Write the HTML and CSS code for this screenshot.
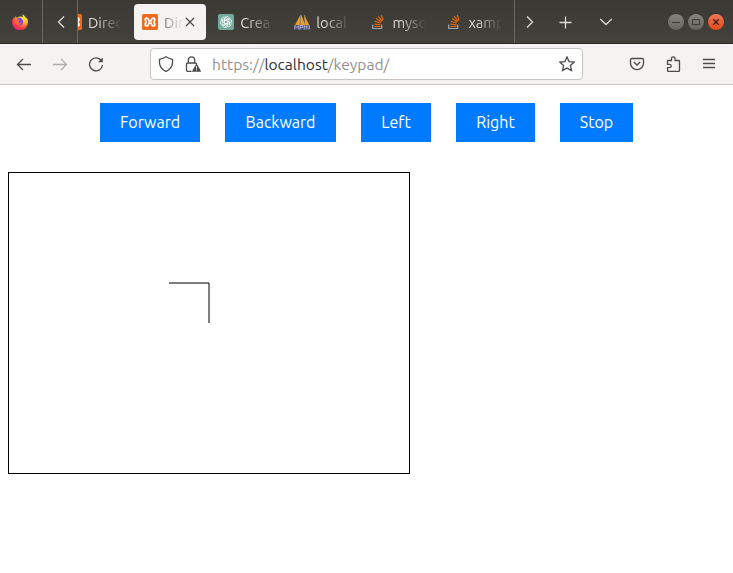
FILE: index.html
```html
<!DOCTYPE html>
<html lang="en">
<head>
<meta charset="utf-8">
<title>Keypad</title>
<link rel="stylesheet" href="styles.css">
</head>
<body>
<svg class="defs" width="0" height="0">
  <defs>
    <radialGradient id="flame" cx=".8" cy=".1" r="1"><stop offset="0" stop-color="#fff04a"/><stop offset=".4" stop-color="#ffc02b"/><stop offset=".7" stop-color="#ff4f3e"/><stop offset="1" stop-color="#ed1a72"/></radialGradient>
    <symbol id="xampp" viewBox="0 0 16 16"><rect width="16" height="16" rx="1.5" fill="#ec6b1c"/><path d="M6.300 5.200Q5.800 4.100 4.600 4.100C2.800 4.100 2.800 6.200 3.800 7L4.300 8 3.800 9C2.800 9.800 2.800 11.900 4.600 11.900Q5.800 11.900 6.300 10.800L7 9.200H9L9.700 10.800Q10.200 11.900 11.400 11.900C13.200 11.900 13.200 9.800 12.200 9L11.700 8 12.200 7C13.200 6.200 13.200 4.100 11.400 4.100Q10.200 4.100 9.700 5.200L9 6.800H7z" fill="none" stroke="#fff" stroke-width="1.700"/></symbol>
    <symbol id="stack" viewBox="0 0 16 16"><path d="M2.7 10.5v4h9v-4" fill="none" stroke="#9ba9b3" stroke-width="1.2"/><path d="M4.3 12.5h6.200M4.300 10l6.200.8M4.700 7.200l6 1.800M6 4.400l5.300 3.400M8.200 2.300l4 4.900M11.300 1l1.700 5.200" fill="none" stroke="#e8670c" stroke-width="1.2"/></symbol>
  </defs>
</svg>
<div class="titlebar">
  <div class="pinned"><svg width="16" height="16" viewBox="0 0 16 16"><path d="M10.800.2c-.6 1.300.1 2.200.5 3C10 2.500 8.500 2.400 7 2.700L4.900 3.800 3.100 2.100c-.3.8-.2 1.300-.1 2L1.400 3.400C.4 5 .1 6.700 0 8.300a8 8 0 0 0 16 0c0-2-.5-3.600-1.500-4.800l-.3 1C13.600 2.500 12 1.700 10.800.2z" fill="url(#flame)"/><circle cx="8" cy="8" r="3.200" fill="#8a45d8"/><path d="M5 4.500Q8 2.500 10.500 5.500L8 6z" fill="#7542e5"/><path d="M2.500 5.500c1.300-1 2.500-.6 3.600.2l1.800.3c-.3 1-1.500.9-2 1.800.4 1.500 2.300 1.200 3.500.7-.7 2-3 3-5 2C2.900 9.300 2 7.200 2.500 5.500z" fill="#ff6934"/></svg></div>
  <div class="scroll-left"><svg width="16" height="16" viewBox="0 0 16 16"><path d="M11 2.500 5.500 8l5.500 5.500" class="light"/></svg></div>
  <div class="tabs">
    <div class="tab"><svg width="16" height="16"><use href="#xampp"/></svg><span class="label">Direc</span></div>
    <div class="tab active"><svg width="16" height="16"><use href="#xampp"/></svg><span class="label">Dir</span><svg class="close" width="10" height="10" viewBox="0 0 10 10"><path d="m1 1 8 8M9 1 1 9"/></svg></div>
    <div class="tab"><svg width="16" height="16" viewBox="0 0 16 16"><rect width="16" height="16" rx="2" fill="#74aa9c"/><g fill="none" stroke="#fff" stroke-width=".75"><path id="petal" d="M6.200 9V5.200C6.200 2 10.300 1.600 11.300 4.200M6.200 7l3.500-2 2.700 1.500"/><use href="#petal" transform="rotate(60 8 8)"/><use href="#petal" transform="rotate(120 8 8)"/><use href="#petal" transform="rotate(180 8 8)"/><use href="#petal" transform="rotate(240 8 8)"/><use href="#petal" transform="rotate(300 8 8)"/></g></svg><span class="label">Crea</span></div>
    <div class="tab"><svg width="16" height="16" viewBox="0 0 16 16"><path d="M6.300 1 1 11h4.800zM7 0l-.2 11h4.500zM10.300 1l1 10h3.900z" fill="#f79a18"/><path d="M6.500 1v10M10.500 1l.7 10" stroke="#b7a78d" stroke-width=".6"/><path d="M0 11h16v4.500H0z" fill="#50527c"/><path d="M.8 15.500v-4l2 2 2-2v4M6.300 15.500v-4h2.500v2H6.500M10.300 15.500v-4l1.300 1.700 1.300-1.700v4M14.300 12h1.300v3h-1.300" fill="none" stroke="#babbe0" stroke-width=".8"/></svg><span class="label">local</span></div>
    <div class="tab"><svg width="16" height="16"><use href="#stack"/></svg><span class="label">mysq</span></div>
    <div class="tab"><svg width="16" height="16"><use href="#stack"/></svg><span class="label">xamp</span></div>
  </div>
  <div class="tab-tools">
    <svg width="16" height="16" viewBox="0 0 16 16"><path d="M5 2.500 10.500 8 5 13.500" class="light"/></svg>
    <svg width="16" height="16" viewBox="0 0 16 16"><path d="M7.500 2.500v12M1.500 8.500h12" class="light"/></svg>
    <svg width="16" height="16" viewBox="0 0 16 16"><path d="m2.200 5 5.800 5.500L13.800 5" class="light"/></svg>
  </div>
  <div class="window-buttons">
    <span class="round"><svg width="16" height="16" viewBox="0 0 16 16"><path d="M4 8.500h8"/></svg></span>
    <span class="round"><svg width="16" height="16" viewBox="0 0 16 16"><path d="M4.500 5.500h7v5h-7z"/></svg></span>
    <span class="round quit"><svg width="16" height="16" viewBox="0 0 16 16"><path d="m5.300 5.300 5.400 5.400M10.700 5.300l-5.400 5.400"/></svg></span>
  </div>
</div>
<div class="toolbar">
  <div class="nav">
    <svg width="16" height="16" viewBox="0 0 16 16"><path d="M15 8.500H1.500M7 3 1.500 8.500 7 14"/></svg>
    <svg class="disabled" width="16" height="16" viewBox="0 0 16 16"><path d="M1 8.500h13.500M9 3l5.500 5.500L9 14"/></svg>
    <svg width="16" height="16" viewBox="0 0 16 16"><path d="M13.300 4.500A6.500 6.500 0 1 0 14.500 9"/><path d="M14.800 1.500v4.800H10z" class="solid"/></svg>
  </div>
  <div class="urlbar">
    <svg width="16" height="16" viewBox="0 0 16 16"><path d="M8 .8c2 1.400 4 2 6.500 2.500v3.500c0 4-2.500 6.700-6.500 8.700-4-2-6.500-4.700-6.500-8.700V3.300C4 2.800 6 2.200 8 .8z"/></svg>
    <svg class="lock" width="16" height="16" viewBox="0 0 16 16"><path d="M6.500 15.300H2.700q-1.200 0-1.200-1.200V8.200Q1.500 7 2.700 7h7.600q1.200 0 1.200 1M3.300 7V4a3.200 3.200 0 0 1 6.400 0v3"/><path d="m11.500 7.200 4.700 8.500H6.800z" class="solid"/><path d="M11.500 10v2.700M11.500 13.500v1" class="mark"/></svg>
    <span class="address">https://<b>localhost</b>/keypad/</span>
    <svg class="star" width="16" height="16" viewBox="0 0 16 16"><path d="m8 1 2.100 4.600 5.100.5-3.800 3.500 1.100 5L8 12.100l-4.500 2.500 1.100-5L.8 6.100l5.100-.5z"/></svg>
  </div>
  <div class="actions">
    <svg width="16" height="16" viewBox="0 0 16 16"><path d="M3 2.500h10q1.500 0 1.500 1.500v3.200a6.500 6.500 0 0 1-13 0V4q0-1.500 1.500-1.500zM4.800 6 8 9l3.200-3"/></svg>
    <svg class="extensions" width="16" height="16" viewBox="0 0 16 16"><path d="M2 4.500h3.500V2.600a1.800 1.800 0 0 1 3.600 0v1.900h3.700q.7 0 .7.700v9.300q0 .9-.9.900H2.400q-.9 0-.9-.9v-2.800h2a1.700 1.700 0 0 0 0-3.400h-2V5.200q0-.7.500-.7z"/></svg>
    <svg width="16" height="16" viewBox="0 0 16 16"><path d="M2 2.500h12M2 6.500h12M2 10.500h12"/></svg>
  </div>
</div>
<main>
  <div class="keypad">
    <button class="forward">Forward</button>
    <button class="backward">Backward</button>
    <button class="left">Left</button>
    <button class="right">Right</button>
    <button class="stop">Stop</button>
  </div>
  <svg class="board" width="400" height="300" viewBox="0 0 400 300"><path d="M160 110h40"/><path d="M200 110v40"/></svg>
</main>
</body>
</html>
```
FILE: styles.css
```css
* { box-sizing: border-box; }
body { margin: 0; background: #fff; font-family: Ubuntu, "Noto Sans", sans-serif; overflow: hidden; }
svg { display: block; flex: none; fill: none; }
.defs { position: absolute; }
.titlebar { display: flex; height: 44px; background: linear-gradient(#3a3934, #42413b); border-bottom: 1px solid #2b2a27; }
.pinned { width: 43px; padding: 14px 0 0 12px; border-right: 1px solid #6a6964; }
.scroll-left { width: 35px; padding: 14px 0 0 10px; border-right: 1px solid #6a6964; }
.light { stroke: #dfdbd2; stroke-width: 1.3; }
.tabs { display: flex; width: 437px; overflow: hidden; border-right: 1px solid #6a6964; }
.tab { display: flex; flex: none; align-items: center; width: 72px; height: 36px; margin: 4px 4.1px 0 0; padding-left: 8px; border-radius: 4px; }
.tab:first-child { margin-left: -20px; }
.label { width: 34px; margin-left: 6px; padding-top: 1px; white-space: nowrap; color: #dfdbd2; font-size: 14.67px; line-height: 20px; mask-image: linear-gradient(90deg, #000 25%, transparent 100%); }
.active { background: #f4f3f1; }
.active .label { width: 20px; color: #777; mask-image: linear-gradient(90deg, #000 0%, transparent 100%); }
.close { margin-left: 1px; stroke: #444; stroke-width: 1.1; }
.tab-tools { display: flex; gap: 22px; width: 153px; padding: 14px 0 0 7px; }
.tab-tools svg:nth-child(2) { margin-left: -2px; }
.tab-tools svg:nth-child(3) { margin-left: 2px; }
.window-buttons { display: flex; gap: 4px; padding-top: 14px; }
.round { width: 16px; height: 16px; border-radius: 50%; background: linear-gradient(#85847d, #65645e); box-shadow: 0 0 0 .5px #33322e; }
.round svg { stroke: #3a3935; }
.quit { background: linear-gradient(#f37858, #df4a16); }
.quit svg { stroke: #3b1d12; stroke-width: 1.3; }
.toolbar { display: flex; height: 41px; padding-top: 4px; background: #f4f3f1; border-bottom: 1px solid #c9c6c2; stroke: #4b4b4a; stroke-width: 1.3; }
.nav { display: flex; gap: 20px; width: 150px; padding: 8px 0 0 16px; }
.disabled { stroke: #b0afad; }
.solid { fill: #4b4b4a; stroke: none; }
.mark { stroke: #fff; stroke-width: 1; }
.urlbar { display: flex; align-items: center; width: 433px; height: 32px; padding: 0 7px; background: #fff; border: 1px solid #c8c4c0; border-radius: 4px; }
.lock { margin-left: 11px; }
.address { margin-left: 11px; color: #919191; font-size: 15.6px; line-height: 20px; }
.address b { color: #303030; font-weight: 400; }
.star { margin-left: auto; }
.actions { display: flex; gap: 20px; padding: 8px 0 0 46px; }
.extensions { margin-left: 1px; margin-right: -1px; }
.actions svg:last-child { margin-top: 1px; }
main { padding: 18px 8px 0; }
.keypad { display: flex; gap: 25px; padding-left: 92px; }
.keypad button { height: 39px; padding: 0; border: 0; background: #007bff; color: #fff; font: 16px/39px Ubuntu, "Noto Sans", sans-serif; }
.keypad .forward { width: 100px; }
.keypad .backward { width: 111px; }
.keypad .left { width: 70px; }
.keypad .right { width: 79px; }
.keypad .stop { width: 73px; }
.board { width: 402px; height: 302px; margin-top: 30px; border: 1px solid #000; stroke: #000; stroke-opacity: .5; stroke-width: 2; }
```
